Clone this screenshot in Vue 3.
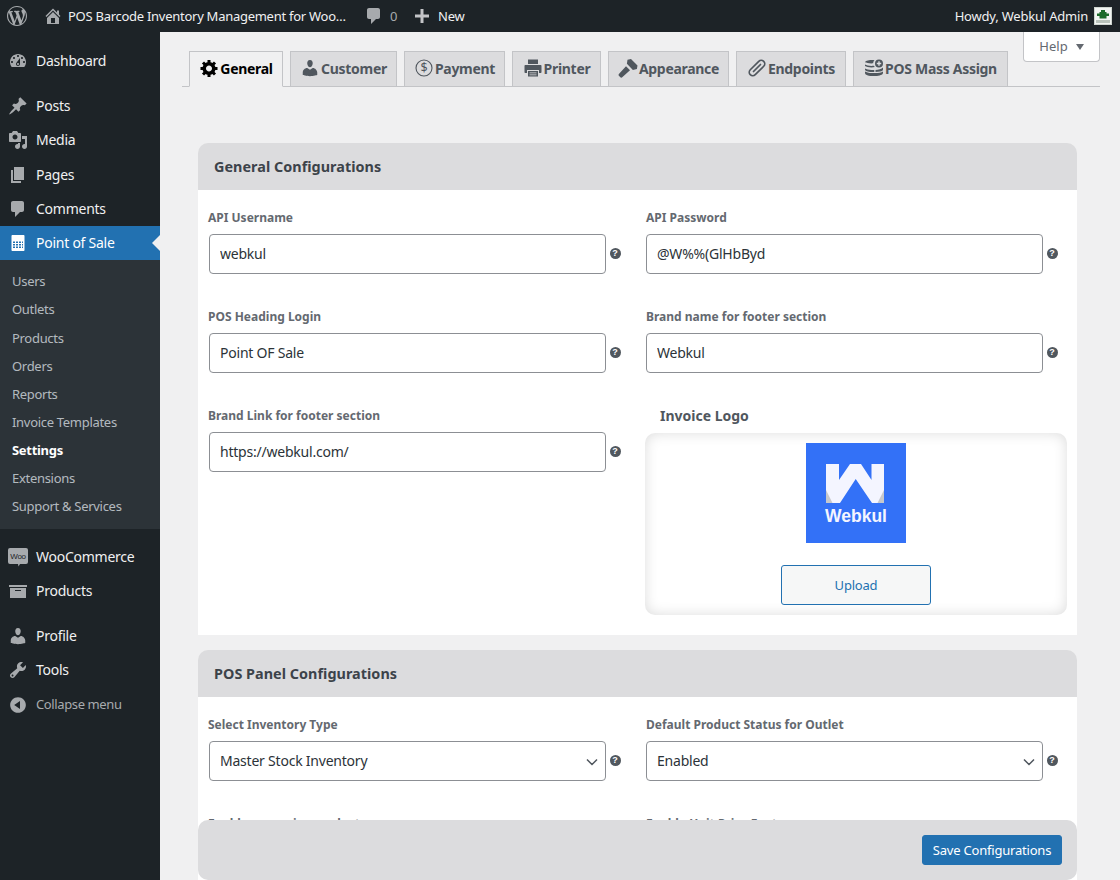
<script setup>
const menuTop = [
  { sep: false, label: 'Dashboard', icon: 'M3.76 16h12.48c1.1-1.37 1.76-3.11 1.76-5 0-4.42-3.58-8-8-8s-8 3.58-8 8c0 1.89.66 3.63 1.76 5zM10 4c.55 0 1 .45 1 1s-.45 1-1 1-1-.45-1-1 .45-1 1-1zM6 6c.55 0 1 .45 1 1s-.45 1-1 1-1-.45-1-1 .45-1 1-1zm8 0c.55 0 1 .45 1 1s-.45 1-1 1-1-.45-1-1 .45-1 1-1zm-5.37 5.55L12 7v6c0 1.1-.9 2-2 2s-2-.9-2-2c0-.57.24-1.08.63-1.45zM4 10c.55 0 1 .45 1 1s-.45 1-1 1-1-.45-1-1 .45-1 1-1zm12 0c.55 0 1 .45 1 1s-.45 1-1 1-1-.45-1-1 .45-1 1-1zm-5 3c0-.55-.45-1-1-1s-1 .45-1 1 .45 1 1 1 1-.45 1-1z' },
  { sep: true, label: 'Posts', icon: 'M10.44 3.02l1.82-1.82 6.36 6.35-1.83 1.82c-1.05-.68-2.48-.57-3.41.36l-.75.75c-.92.93-1.04 2.35-.35 3.41l-1.83 1.82-2.41-2.41-2.8 2.79c-.42.42-3.38 2.71-3.8 2.29s1.86-3.39 2.28-3.81l2.79-2.79L4.1 9.36l1.83-1.82c1.05.69 2.48.57 3.4-.36l.75-.75c.93-.92 1.05-2.35.36-3.41z' },
  { sep: false, label: 'Media', icon: 'M13 11V4c0-.55-.45-1-1-1h-1.67L9 1H5L3.67 3H2c-.55 0-1 .45-1 1v7c0 .55.45 1 1 1h10c.55 0 1-.45 1-1zM7 4.5c1.38 0 2.5 1.12 2.5 2.5S8.38 9.5 7 9.5 4.5 8.38 4.5 7 5.62 4.5 7 4.5zM14 6h5v10.5c0 1.38-1.12 2.5-2.5 2.5S14 17.88 14 16.5s1.12-2.5 2.5-2.5c.17 0 .34.02.5.05V9h-3V6zm-4 8.05V13h2v3.5c0 1.38-1.12 2.5-2.5 2.5S7 17.88 7 16.5 8.12 14 9.5 14c.17 0 .34.02.5.05z' },
  { sep: false, label: 'Pages', icon: 'M6 15V2h10v13H6zm-1 1h8v2H3V5h2v11z' },
  { sep: false, label: 'Comments', icon: 'M5 2h9c1.1 0 2 .9 2 2v7c0 1.1-.9 2-2 2h-2l-5 5v-5H5c-1.1 0-2-.9-2-2V4c0-1.1.9-2 2-2z' }
]
const calcIcon = 'M4.5 2h11c.55 0 1 .45 1 1v14c0 .55-.45 1-1 1h-11c-.55 0-1-.45-1-1V3c0-.55.45-1 1-1zM5 8.500V10h2V8.500H5zm3 0V10h2V8.500H8zm3 0V10h2V8.500h-2zm3 0V10h1V8.500h-1zM5 11v1.500h2V11H5zm3 0v1.500h2V11H8zm3 0v1.500h2V11h-2zm3 0v1.500h1V11h-1zM5 13.500V15h2v-1.500H5zm3 0V15h2v-1.500H8zm3 0V15h2v-1.500h-2zm3 0V15h1v-1.500h-1z'
const submenu = ['Users', 'Outlets', 'Products', 'Orders', 'Reports', 'Invoice Templates', 'Settings', 'Extensions', 'Support & Services']
const menuBottom = [
  { sep: false, label: 'Products', icon: 'M19 4v2H1V4h18zM2 7h16v10H2V7zm11 3V9H7v1h6z' },
  { sep: true, label: 'Profile', icon: 'M10 9.25c-2.27 0-2.73-3.44-2.73-3.44C7 4.02 7.820 2 9.970 2c2.160 0 2.980 2.020 2.710 3.810 0 0-.41 3.440-2.680 3.440zm0 2.570L12.720 10c2.390 0 4.520 2.330 4.520 4.530v2.490s-3.650 1.130-7.240 1.130c-3.650 0-7.240-1.130-7.240-1.130v-2.490c0-2.250 1.940-4.480 4.470-4.480z' },
  { sep: false, label: 'Tools', icon: 'M16.68 9.77c-1.34 1.34-3.3 1.67-4.95.99l-5.41 6.52c-.99.99-2.59.99-3.58 0s-.99-2.59 0-3.57l6.52-5.42c-.68-1.65-.35-3.61.99-4.95 1.28-1.28 3.12-1.62 4.72-1.06l-2.89 2.89 2.82 2.82 2.86-2.87c.53 1.58.18 3.39-1.08 4.65zM3.81 16.21c.4.39 1.04.39 1.43 0 .4-.4.4-1.04 0-1.43-.39-.4-1.03-.4-1.43 0-.39.39-.39 1.03 0 1.43z' }
]
const collapseIcon = 'M10 2.16c4.33 0 7.84 3.51 7.84 7.84s-3.51 7.84-7.84 7.84S2.16 14.33 2.16 10 5.71 2.16 10 2.16zm2 11.72V6.120L6.180 9.970z'
const tabs = [
  { label: 'General', w: 94, active: true, kind: 'gear' },
  { label: 'Customer', w: 107, kind: 'user' },
  { label: 'Payment', w: 101, kind: 'money' },
  { label: 'Printer', w: 89, kind: 'printer' },
  { label: 'Appearance', w: 121, kind: 'hammer' },
  { label: 'Endpoints', w: 110, kind: 'clip' },
  { label: 'POS Mass Assign', w: 155, kind: 'db' }
]
const gear = 'M18 12h-2.180c-.17.7-.44 1.350-.81 1.930l1.540 1.540-2.100 2.100-1.540-1.540c-.58.36-1.230.63-1.910.79V19H8v-2.180c-.68-.16-1.330-.43-1.910-.79l-1.540 1.540-2.120-2.120 1.540-1.540c-.36-.58-.63-1.230-.79-1.910H1V9.030h2.170c.16-.7.44-1.350.8-1.940L2.430 5.550l2.100-2.100 1.540 1.540c.58-.37 1.240-.64 1.930-.81V2h3v2.180c.68.16 1.330.43 1.910.79l1.540-1.540 2.120 2.120-1.540 1.540c.36.59.64 1.240.8 1.940H18V12zm-8.500 1.500c1.660 0 3-1.340 3-3s-1.340-3-3-3-3 1.340-3 3 1.340 3 3 3z'
const userIcon = menuBottom[1].icon
const hammer = 'M9.500 1.800L13 1l6.500 6.500-.6 3.500-4 1-6-6.200zM8 8.300l4 4-7.500 6.800c-.8.7-1.700.7-2.400 0l-1-1c-.7-.7-.7-1.600 0-2.400z'
const generalFields = [
  { label: 'API Username', value: 'webkul' },
  { label: 'API Password', value: '@W%%(GlHbByd' },
  { label: 'POS Heading Login', value: 'Point OF Sale' },
  { label: 'Brand name for footer section', value: 'Webkul' },
  { label: 'Brand Link for footer section', value: 'https://webkul.com/' }
]
const panelFields = [
  { label: 'Select Inventory Type', options: ['Master Stock Inventory'] },
  { label: 'Default Product Status for Outlet', options: ['Enabled'] },
  { label: 'Enable zero price product', options: ['Enabled'] },
  { label: 'Enable Unit Price Feature', options: ['Enabled'] }
]
</script>

<template>
  <div class="page">
    <header class="adminbar">
      <div class="bar-left">
        <svg class="wp" viewBox="0 0 20 20"><path d="M20 10c0-5.510-4.490-10-10-10C4.480 0 0 4.490 0 10c0 5.520 4.480 10 10 10 5.510 0 10-4.480 10-10zM7.780 15.370L4.370 6.220c.55-.02 1.170-.08 1.170-.08.5-.06.44-1.130-.06-1.110 0 0-1.450.11-2.370.11-.18 0-.37 0-.58-.01C4.120 2.690 6.870 1.110 10 1.110c2.330 0 4.450.87 6.050 2.340-.68-.11-1.650.39-1.650 1.580 0 .74.45 1.360.9 2.100.35.61.55 1.360.55 2.460 0 1.490-1.400 5-1.400 5l-3.030-8.370c.54-.02.82-.17.82-.17.5-.05.44-1.250-.06-1.220 0 0-1.440.12-2.380.12-.87 0-2.330-.12-2.330-.12-.5-.03-.56 1.200-.06 1.220l.92.08 1.260 3.410zM17.410 10c.24-.64.74-1.870.43-4.250.7 1.290 1.050 2.710 1.050 4.250 0 3.290-1.730 6.240-4.400 7.780.97-2.590 1.940-5.200 2.920-7.780zM6.100 18.090C3.120 16.650 1.110 13.530 1.110 10c0-1.300.23-2.480.72-3.590C3.250 10.300 4.670 14.200 6.100 18.090zm4.030-6.630l2.580 6.980c-.86.29-1.760.45-2.710.45-.79 0-1.570-.11-2.290-.33.81-2.380 1.620-4.740 2.420-7.100z" /></svg>
        <svg class="home" viewBox="0 0 20 20"><path d="M16 8.500l1.530 1.530-1.060 1.060L10 4.620l-6.470 6.470-1.060-1.060L10 2.500l4 4v-2h2v4zm-6-2.460l6 5.990V18H4v-5.970zM12 17v-5H8v5h4z" /></svg>
        <span class="site">POS Barcode Inventory Management for Woo…</span>
        <svg class="bubble" viewBox="0 0 20 20"><path d="M5 2h9c1.100 0 2 .9 2 2v7c0 1.100-.9 2-2 2h-2l-5 5v-5H5c-1.100 0-2-.9-2-2V4c0-1.100.9-2 2-2z" /></svg>
        <span class="count">0</span>
        <svg class="plus" viewBox="0 0 20 20"><path d="M17 8.500v3h-5.500V17h-3v-5.500H3v-3h5.500V3h3v5.500z" /></svg>
        <span class="new">New</span>
      </div>
      <div class="bar-right">
        <span>Howdy, Webkul Admin</span>
        <svg class="avatar" viewBox="0 0 18 18">
          <rect width="18" height="18" fill="#cfd6d0" />
          <rect x="1" y="1" width="16" height="16" fill="#f2f5f2" />
          <path d="M7 3h4v2h1.500v1.500H15V9h-2.500v2.500h-7V9H3V6.500h2.500V5H7z" fill="#1c6b2a" />
          <path d="M2 13h14v3H2z" fill="#b9c3bb" />
        </svg>
      </div>
    </header>

    <div class="shell">
      <nav class="sidebar">
        <a v-for="m in menuTop" :key="m.label" class="item" :class="{ gap: m.sep }">
          <svg class="mi" viewBox="0 0 20 20"><path :d="m.icon" /></svg>
          <span>{{ m.label }}</span>
        </a>
        <a class="item current">
          <svg class="mi" viewBox="0 0 20 20"><path fill-rule="evenodd" :d="calcIcon" /></svg>
          <span>Point of Sale</span>
          <i class="pointer"></i>
        </a>
        <ul class="sub">
          <li v-for="s in submenu" :key="s" :class="{ on: s === 'Settings' }">{{ s }}</li>
        </ul>
        <a class="item gap woo-item">
          <svg class="mi woo" viewBox="0 0 20 20">
            <path d="M2 1h16a2 2 0 0 1 2 2v12a2 2 0 0 1-2 2h-6l-1.500 2.500L10 17H2a2 2 0 0 1-2-2V3a2 2 0 0 1 2-2z" />
            <text x="10" y="11.800" text-anchor="middle" class="woo-t">Woo</text>
          </svg>
          <span>WooCommerce</span>
        </a>
        <a v-for="m in menuBottom" :key="m.label" class="item" :class="{ gap: m.sep }">
          <svg class="mi" viewBox="0 0 20 20"><path :d="m.icon" /></svg>
          <span>{{ m.label }}</span>
        </a>
        <a class="item collapse">
          <svg class="mi" viewBox="0 0 20 20"><path :d="collapseIcon" /></svg>
          <span>Collapse menu</span>
        </a>
      </nav>

      <main class="main">
        <button class="help"><span>Help</span> <i class="caret"></i></button>

        <div class="tabs">
          <a v-for="t in tabs" :key="t.label" class="tab" :class="{ active: t.active }" :style="{ width: t.w + 'px' }">
            <svg v-if="t.kind === 'gear'" class="ti" viewBox="0 0 19 20"><path fill-rule="evenodd" :d="gear" /></svg>
            <svg v-else-if="t.kind === 'user'" class="ti" viewBox="0 0 20 20"><path :d="userIcon" /></svg>
            <svg v-else-if="t.kind === 'money'" class="ti" viewBox="0 0 20 20">
              <circle cx="10" cy="10" r="8" class="line" />
              <text x="10" y="14.300" text-anchor="middle" class="dollar">$</text>
            </svg>
            <svg v-else-if="t.kind === 'printer'" class="ti" viewBox="0 0 20 20">
              <path fill-rule="evenodd" d="M5 1.500h10V6H5zM2.500 7h15c.6 0 1 .4 1 1v6c0 .6-.4 1-1 1H16v-3H4v3H2.500c-.6 0-1-.4-1-1V8c0-.6.4-1 1-1zM5 13h10v5.500H5zm1.500 1.500v.8h7v-.8zm0 2v.8h7v-.8z" />
            </svg>
            <svg v-else-if="t.kind === 'hammer'" class="ti" viewBox="0 0 20 20"><path :d="hammer" /></svg>
            <svg v-else-if="t.kind === 'clip'" class="ti" viewBox="0 0 20 20">
              <rect x="0.500" y="6.500" width="19" height="7" rx="3.500" transform="rotate(-45 10 10)" class="clip" />
              <path class="clip" d="M6.500 13.500L13.500 6.500" />
            </svg>
            <svg v-else class="ti" viewBox="0 0 20 20">
              <path d="M1 4.500c0-1.500 3-2.500 6.500-2.500 1.100 0 2.100.1 3 .3-.8.7-1.300 1.700-1.400 3-.5 0-1 .1-1.600.1C4.500 5.400 2.300 4.900 1 4v.5zM1 6.500c1.400.9 3.700 1.400 6.500 1.400.8 0 1.600 0 2.300-.1.3.5.7.9 1.200 1.300-1 .3-2.200.4-3.500.4C4.500 9.500 2.300 9 1 8.100V6.500zM1 10.500c1.400.9 3.700 1.400 6.500 1.400h2.800v2.100H7.500C4 14 1 13 1 11.500v-1zM19 9.500v2c0 .9-1 1.600-2.700 2.100-1.400.3-3 .4-4.800.4v-2.100c3 0 6-.8 7.500-2.400zM1 13.500c1.400.9 3.700 1.500 6.500 1.500h4c2.800 0 6-.5 7.500-1.500V15c0 1.600-3.500 3-7.500 3h-4C4 18 1 16.600 1 15v-1.500z" />
              <path fill-rule="evenodd" d="M15 1.500a4 4 0 1 1 0 8 4 4 0 0 1 0-8zM14.300 3.300v1.500h-1.500v1.400h1.500v1.500h1.400V6.200h1.500V4.800h-1.500V3.300z" />
            </svg>
            <span class="tab-text">{{ t.label }}</span>
          </a>
        </div>

        <section class="card first">
          <h2>General Configurations</h2>
          <div class="grid">
            <div v-for="(f, i) in generalFields" :key="f.label" class="field" :class="{ left: i % 2 === 0 }">
              <label>{{ f.label }}</label>
              <div class="control">
                <input :value="f.value" readonly />
                <span class="q">?</span>
              </div>
            </div>
            <div class="logo-field">
              <h3>Invoice Logo</h3>
              <div class="logo-box">
                <svg class="logo" viewBox="0 0 100 100">
                  <rect width="100" height="100" fill="#3371f7" />
                  <path d="M20 21H33V37L44 21H55L65.500 37V21H78V60H66L49.700 36 34 60H20Z" fill="#f4f5ff" />
                  <path d="M20 47V60H26.500z" fill="#c6c8cc" />
                  <path d="M78 47V60H71.500z" fill="#c6c8cc" />
                  <text x="50" y="79" text-anchor="middle" class="logo-t">Webkul</text>
                </svg>
                <button class="upload">Upload</button>
              </div>
            </div>
          </div>
        </section>

        <section class="card">
          <h2>POS Panel Configurations</h2>
          <div class="grid">
            <div v-for="(f, i) in panelFields" :key="f.label" class="field" :class="{ left: i % 2 === 0 }">
              <label>{{ f.label }}</label>
              <div class="control">
                <div class="select">
                  <select>
                    <option v-for="o in f.options" :key="o">{{ o }}</option>
                  </select>
                  <svg class="chev" viewBox="0 0 12 8"><path d="M1 1.500l5 5 5-5" /></svg>
                </div>
                <span class="q">?</span>
              </div>
            </div>
          </div>
        </section>

        <div class="savebar">
          <button class="save">Save Configurations</button>
        </div>
      </main>
    </div>
  </div>
</template>

<style>
html, body { margin: 0; background: #f0f0f1; }
</style>

<style scoped>
* { box-sizing: border-box; }
.page {
  width: 1120px;
  height: 880px;
  overflow: hidden;
  display: flex;
  flex-direction: column;
  font-family: "Noto Sans", sans-serif;
  font-size: 13px;
  color: #3c434a;
  background: #f0f0f1;
}
.adminbar {
  height: 32px;
  flex: none;
  background: #1d2327;
  color: #f0f0f1;
  display: flex;
  align-items: center;
  justify-content: space-between;
  padding: 0 8px 0 7px;
  letter-spacing: -0.2px;
}
.bar-left, .bar-right { display: flex; align-items: center; }
.adminbar svg path { fill: #a7aaad; }
.wp { width: 20px; height: 20px; }
.home { width: 20px; height: 20px; margin-left: 16px; }
.site { width: 283px; margin-left: 5px; white-space: nowrap; font-size: 13px; letter-spacing: -0.27px; }
.bubble { width: 20px; height: 20px; margin-left: 13px; }
.count { margin-left: 6px; color: #a7aaad; width: 9px; }
.plus { width: 20px; height: 20px; margin-left: 13px; }
.adminbar .plus path { fill: #c3c4c7; }
.new { margin-left: 6px; }
.avatar { width: 18px; height: 18px; margin-left: 6px; }
.adminbar .avatar path { fill: revert-layer; }
.shell { flex: 1; display: flex; min-height: 0; }
.sidebar {
  width: 160px;
  flex: none;
  background: #1d2327;
  padding-top: 12px;
  display: flex;
  flex-direction: column;
}
.item {
  position: relative;
  height: 34.25px;
  flex: none;
  display: flex;
  align-items: center;
  color: #f0f0f1;
  font-size: 14px;
  padding-left: 8px;
  letter-spacing: -0.25px;
}
.item.gap { margin-top: 10.75px; }
.item.woo-item { height: 33.75px; }
.item span { margin-left: 8px; margin-bottom: 1px; white-space: nowrap; }
.mi { width: 20px; height: 20px; fill: #a7aaad; flex: none; }
.item.current { background: #2271b1; color: #fff; }
.item.current .mi { fill: #fff; }
.pointer {
  position: absolute;
  right: 0;
  top: 50%;
  margin-top: -8px;
  border: 8px solid transparent;
  border-right-color: #f0f0f1;
  border-left-width: 0;
}
.sub {
  list-style: none;
  margin: 0;
  padding: 7px 0 9px;
  background: #2c3338;
  flex: none;
}
.sub li {
  height: 28.125px;
  line-height: 28px;
  padding-left: 12px;
  font-size: 13px;
  letter-spacing: -0.3px;
  color: rgba(240, 246, 252, 0.7);
  white-space: nowrap;
}
.sub li.on { color: #fff; font-weight: 700; }
.woo-t { font: 400 8px "Liberation Sans", sans-serif; fill: #1d2327; }
.collapse { color: #a7aaad; font-size: 13px; letter-spacing: -0.38px; }
.item.collapse span { margin-bottom: 2px; }

.main {
  position: relative;
  flex: 1;
  min-width: 0;
  overflow: hidden;
  padding: 19px 20px 0 22px;
}
.help {
  position: absolute;
  top: 0;
  right: 20px;
  width: 77px;
  height: 30px;
  border: 1px solid #c3c4c7;
  border-top: 0;
  border-radius: 0 0 4px 4px;
  background: #fff;
  color: #646970;
  font: 13px "Noto Sans", sans-serif;
  display: flex;
  align-items: center;
  justify-content: center;
  gap: 8px;
  padding: 0;
}
.help span { margin-bottom: 2px; }
.caret {
  border: 4px solid transparent;
  border-top: 6px solid #646970;
  border-bottom: 0;
}
.tabs {
  display: flex;
  gap: 7px;
  padding-left: 7px;
  height: 36px;
  border-bottom: 1px solid #c3c4c7;
}
.tab {
  height: 36px;
  flex: none;
  display: flex;
  align-items: center;
  justify-content: center;
  gap: 1px;
  border: 1px solid #c3c4c7;
  background: #dcdcde;
  color: #50575e;
  font-size: 14px;
  font-weight: 700;
  letter-spacing: -0.3px;
  white-space: nowrap;
}
.tab-text { margin-bottom: 2px; }
.tab.active { background: #f0f0f1; color: #000; border-bottom-color: #f0f0f1; }
.ti { width: 20px; height: 20px; fill: #50575e; flex: none; margin-top: -3px; }
.active .ti { fill: #000; }
.line { fill: none; stroke: #50575e; stroke-width: 1.100; }
.dollar { font: 400 12.500px "Noto Sans", sans-serif; fill: #50575e; }
.clip { fill: none; stroke: #50575e; stroke-width: 1.700; stroke-linecap: round; }

.card { margin-left: 16px; width: 879px; }
.card + .card { margin-top: 15px; }
.card.first { margin-top: 56px; }
.card h2 {
  margin: 0;
  height: 47px;
  line-height: 47px;
  padding-left: 16px;
  background: #dcdcde;
  border-radius: 10px 10px 0 0;
  font-size: 14.400px;
  font-weight: 700;
  letter-spacing: 0.03px;
  color: #3c434a;
}
.grid {
  background: #fff;
  display: grid;
  grid-template-columns: 438px 431px;
  padding: 0 0 20px 10px;
  align-items: start;
}
.field { padding-top: 19px; height: 99px; }
.field label {
  display: block;
  height: 18px;
  line-height: 18px;
  margin-bottom: 7px;
  font-size: 12px;
  font-weight: 700;
  color: #646970;
  white-space: nowrap;
}
.control { display: flex; align-items: center; gap: 3px; }
.left .control { margin-left: 1px; }
input, select {
  width: 397px;
  height: 40px;
  border: 1px solid #8c8f94;
  border-radius: 4px;
  background: #fff;
  padding: 0 10px 2px;
  color: #2c3338;
  font: 14px "Noto Sans", sans-serif;
  letter-spacing: -0.22px;
  outline: none;
}
.select { position: relative; width: 397px; flex: none; }
select { appearance: none; display: block; }
.chev {
  position: absolute;
  right: 8px;
  top: 17px;
  width: 12px;
  height: 8px;
  fill: none;
  stroke: #50575e;
  stroke-width: 1.500;
}
.q {
  width: 11px;
  height: 11px;
  border-radius: 50%;
  background: #50575e;
  color: #fff;
  font: 700 9px/11px "Liberation Sans", sans-serif;
  text-align: center;
  flex: none;
  margin: 0 0 1px 0.5px;
}
.logo-field { padding-top: 19px; grid-column: 2; grid-row: 3; margin-left: -1px; }
.logo-field h3 {
  margin: 0 0 8px 15px;
  height: 18px;
  line-height: 18px;
  font-size: 14px;
  font-weight: 700;
  color: #50575e;
}
.logo-box {
  width: 422px;
  height: 182px;
  padding: 10px 0;
  border-radius: 10px;
  background: #fff;
  box-shadow: inset 0 0 14px rgba(0, 0, 0, 0.14);
  display: flex;
  flex-direction: column;
  align-items: center;
  gap: 22px;
}
.logo { width: 100px; height: 100px; flex: none; display: block; }
.logo-t { font: 700 17.500px "Liberation Sans", sans-serif; fill: #f4f5ff; }
.upload {
  width: 150px;
  height: 40px;
  flex: none;
  border: 1px solid #2271b1;
  border-radius: 3px;
  background: #f6f7f7;
  color: #2271b1;
  font: 13px "Noto Sans", sans-serif;
  letter-spacing: -0.2px;
  padding: 0 0 1px;
}
.savebar {
  position: absolute;
  left: 38px;
  top: 788px;
  width: 879px;
  height: 60px;
  background: #dcdcde;
  border-radius: 10px;
  display: flex;
  align-items: center;
  justify-content: flex-end;
  padding-right: 15px;
}
.save {
  width: 140px;
  height: 30px;
  border: 1px solid #2271b1;
  border-radius: 3px;
  background: #2271b1;
  color: #fff;
  font: 13px "Noto Sans", sans-serif;
  letter-spacing: -0.21px;
  padding: 0;
}
</style>
